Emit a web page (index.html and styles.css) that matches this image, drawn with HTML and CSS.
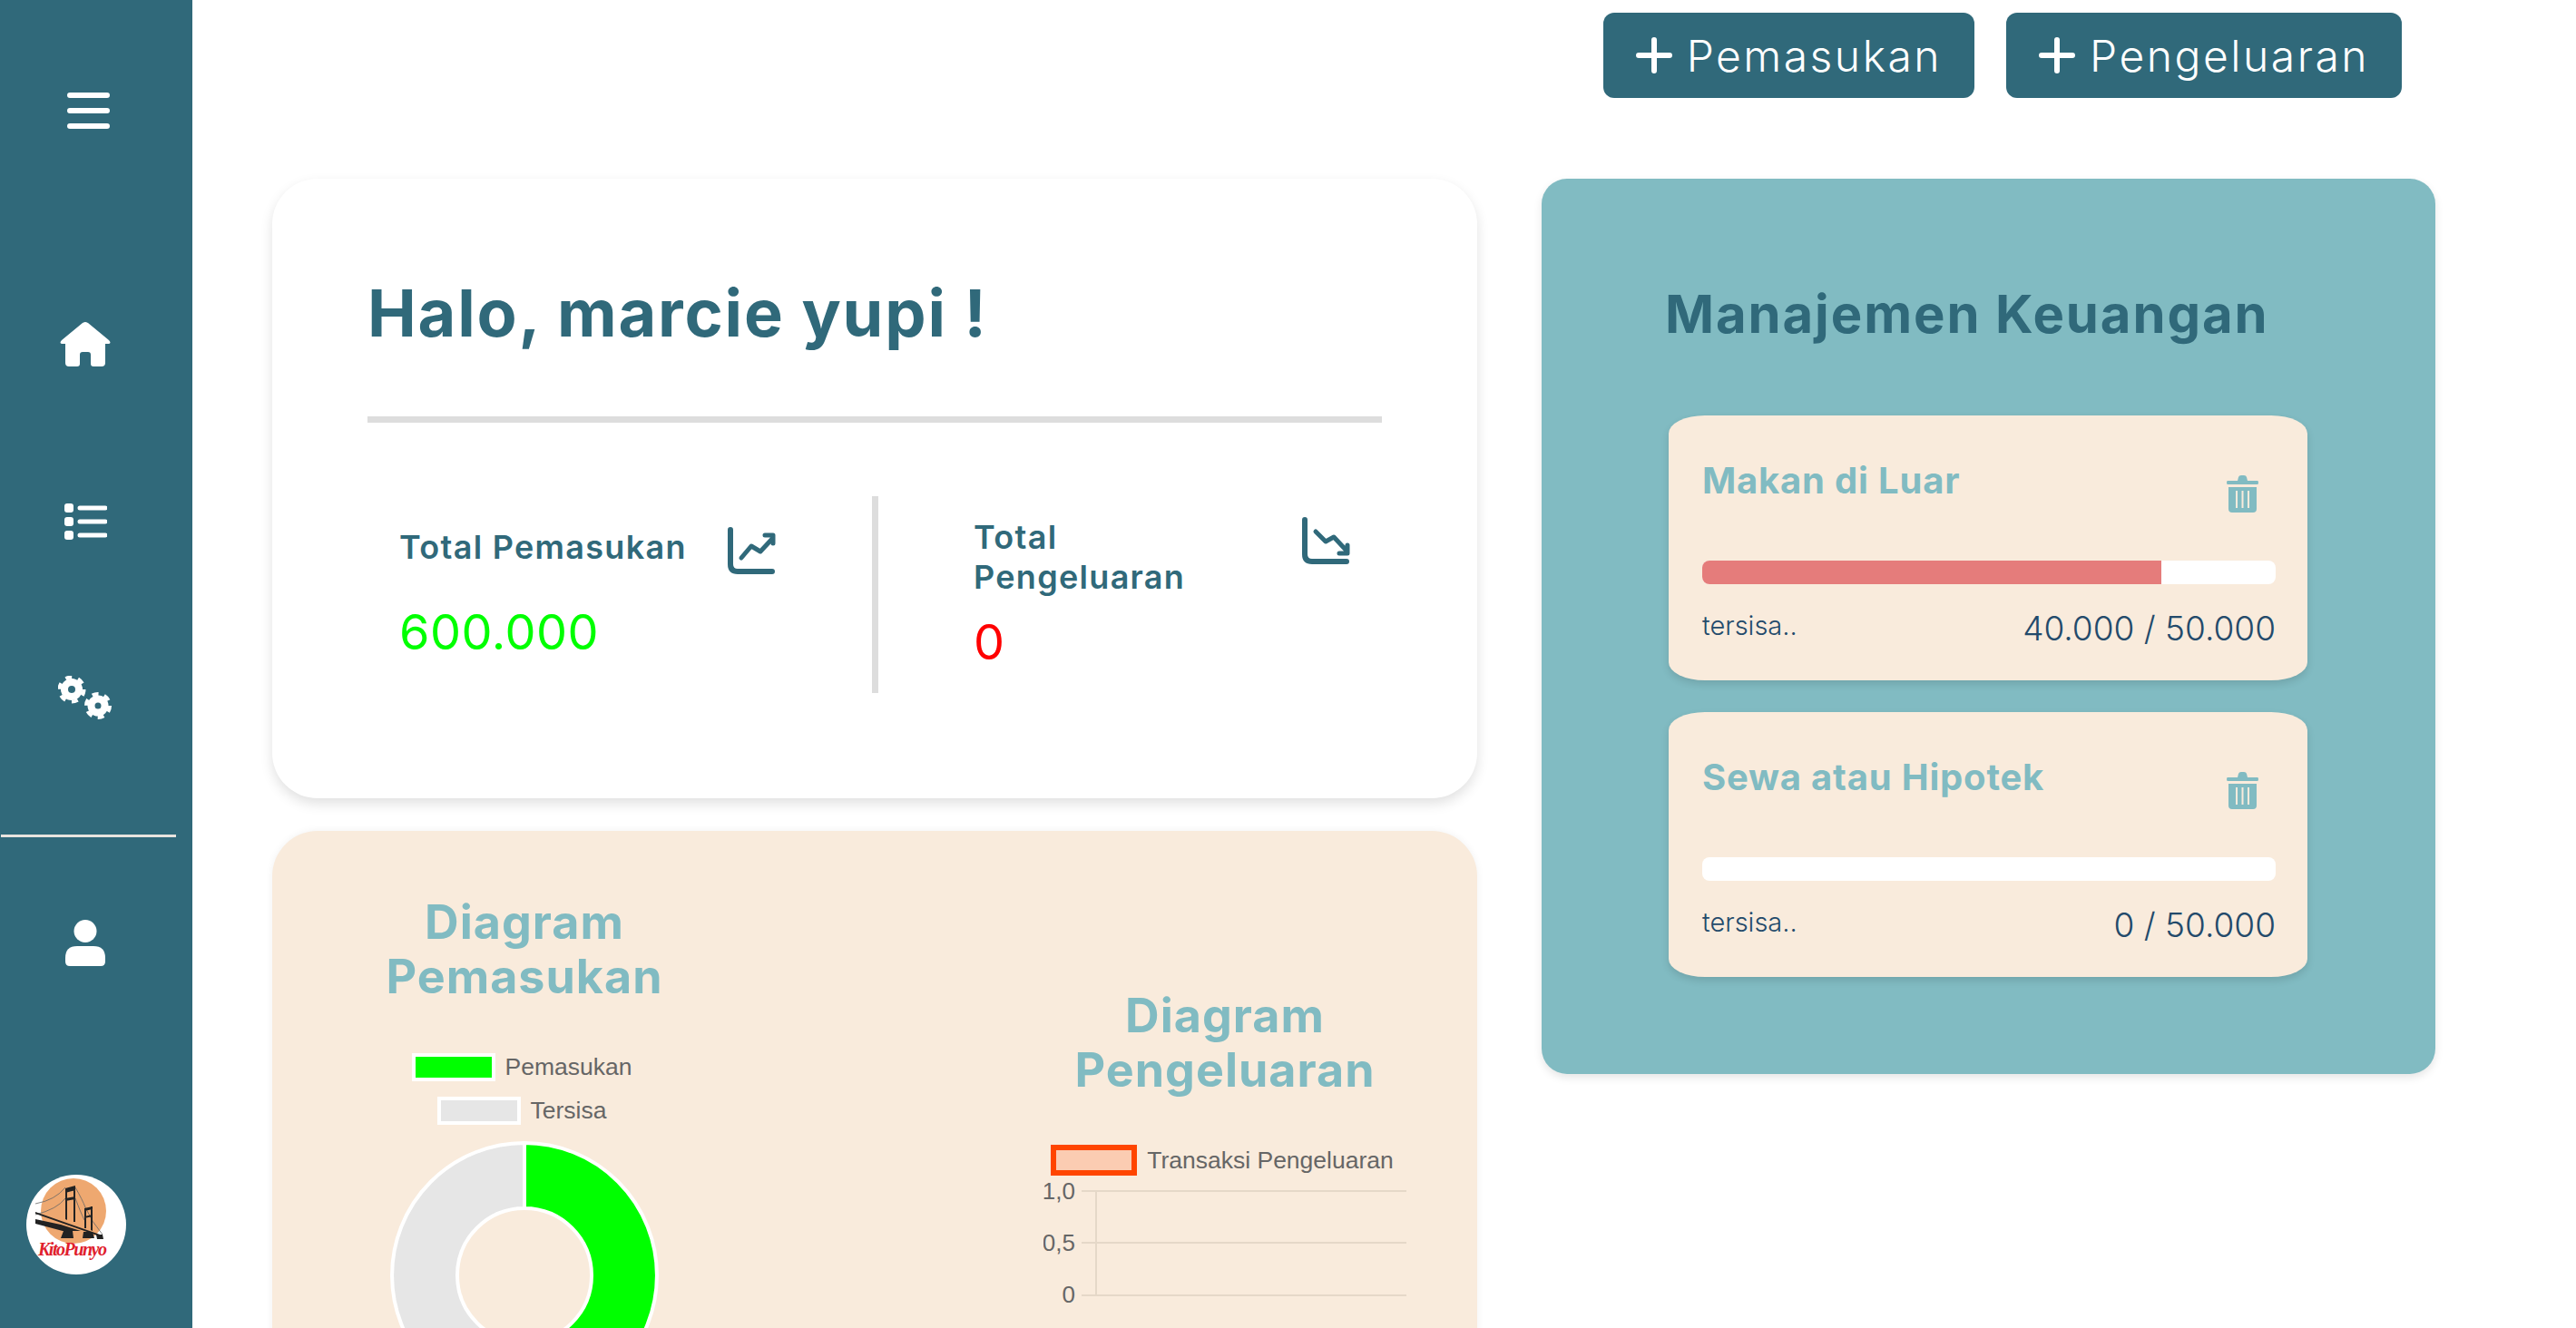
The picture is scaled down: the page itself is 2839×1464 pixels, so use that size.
FILE: index.html
```html
<!DOCTYPE html>
<html lang="id">
<head>
    <meta charset="UTF-8">
    <meta name="viewport" content="width=device-width, initial-scale=1.0">
    <title>KitoPunyo</title>
    <link rel="stylesheet" href="styles.css">
</head>
<body>
    <div class="app">
        <!-- Sidebar -->
        <nav class="sidebar">
            <svg class="nav-icon icon-menu" viewBox="0 0 47 40"><path d="M3 3H44M3 20H44M3 37H44" stroke="#fff" stroke-width="6" stroke-linecap="round"/></svg>
            <svg class="nav-icon icon-home" viewBox="0 0 56 49"><path d="M28 0Q29 0 31 1L54 20Q57 23 54 24H50V45Q50 49 46 49H37Q34 49 34 46V36Q34 33 31 33H25Q22 33 22 36V46Q22 49 19 49H10Q6 49 6 45V24H2Q-1 23 2 20L25 1Q27 0 28 0Z" fill="#fff"/></svg>
            <svg class="nav-icon icon-list" viewBox="0 0 47 40"><g fill="#fff"><rect x="0" y="0" width="10" height="10" rx="3"/><rect x="0" y="15" width="10" height="10" rx="3"/><rect x="0" y="30" width="10" height="10" rx="3"/></g><path d="M17 5H45M17 20H45M17 35H45" stroke="#fff" stroke-width="5" stroke-linecap="round"/></svg>
            <svg class="nav-icon icon-gears" viewBox="0 0 60 49">
                <g fill="none" stroke="#fff">
                    <circle cx="15" cy="15" r="8" stroke-width="8"/>
                    <circle cx="15" cy="15" r="13.5" stroke-width="4" stroke-dasharray="7 7.1"/>
                    <circle cx="44" cy="33" r="7.5" stroke-width="8"/>
                    <circle cx="44" cy="33" r="13" stroke-width="4" stroke-dasharray="7 6.6"/>
                </g>
            </svg>
            <div class="nav-divider"></div>
            <svg class="nav-icon icon-user" viewBox="0 0 44 51"><circle cx="22" cy="12.5" r="12.5" fill="#fff"/><path d="M0 46V42Q0 29 13 29H31Q44 29 44 42V46Q44 51 39 51H5Q0 51 0 46Z" fill="#fff"/></svg>
            <svg class="nav-logo" viewBox="0 0 110 110">
                <circle cx="55" cy="55" r="55" fill="#fff"/>
                <ellipse cx="52" cy="40" rx="36" ry="36" fill="#eea870"/>
                <g fill="none" stroke="#666" stroke-width="0.8">
                    <path d="M10 32Q32 28 43 14M10 44Q34 38 43 26M54 14Q62 28 65 36Q72 52 84 66M54 26Q60 42 64 50"/>
                </g>
                <g fill="#222">
                    <path d="M43 16L45 16V50L43 49ZM52 13L54 13V52L52 52ZM43 15L54 12V17L43 20ZM43 26L54 24V27L43 29ZM64 37L66 37V59L64 59ZM71 35L73 35V62L71 61ZM64 37L73 35V38L64 40ZM64 46L73 44V46L64 48Z"/>
                    <path d="M10 41L84 67V69L10 43ZM10 49L38 55L60 62H40L10 54Z"/>
                    <path d="M41 62H51L52 70H38ZM63 63H73L75 70H62ZM77 66H84L85 71H78Z"/>
                </g>
                <text x="13" y="89" class="logo-text" textLength="76">KitoPunyo</text>
            </svg>
        </nav>

        <main class="main">
            <div class="actions">
                <button class="btn">
                    <svg class="btn-plus" viewBox="0 0 40 40"><path d="M20 3V37M3 20H37" stroke="#fff" stroke-width="6" stroke-linecap="round"/></svg>
                    Pemasukan
                </button>
                <button class="btn">
                    <svg class="btn-plus" viewBox="0 0 40 40"><path d="M20 3V37M3 20H37" stroke="#fff" stroke-width="6" stroke-linecap="round"/></svg>
                    Pengeluaran
                </button>
            </div>

            <div class="content">
                <div class="left-col">
                    <!-- Greeting -->
                    <section class="card-hello">
                        <h1>Halo, marcie yupi !</h1>
                        <hr class="hello-line">
                        <div class="stats">
                            <div class="stat stat-in">
                                <div class="stat-head">
                                    <span class="stat-label">Total Pemasukan</span>
                                    <svg class="stat-icon" viewBox="1 0 53 53"><path d="M4 3V41Q4 49 12 49H50" fill="none" stroke="#30697a" stroke-width="6" stroke-linecap="round"/><path d="M16 34L27 21L37 27L50 13M42 9H51V18" fill="none" stroke="#30697a" stroke-width="5" stroke-linecap="round" stroke-linejoin="round"/></svg>
                                </div>
                                <div class="stat-value value-in">600.000</div>
                            </div>
                            <div class="stat-divider"></div>
                            <div class="stat stat-out">
                                <div class="stat-head">
                                    <span class="stat-label">Total Pengeluaran</span>
                                    <svg class="stat-icon" viewBox="1 0 53 53"><path d="M4 3V41Q4 49 12 49H50" fill="none" stroke="#30697a" stroke-width="6" stroke-linecap="round"/><path d="M16 16L27 27L36 22L50 37M42 40H51V31" fill="none" stroke="#30697a" stroke-width="5" stroke-linecap="round" stroke-linejoin="round"/></svg>
                                </div>
                                <div class="stat-value value-out">0</div>
                            </div>
                        </div>
                    </section>

                    <!-- Charts -->
                    <section class="card-charts">
                        <div class="chart-col chart-income">
                            <h2>Diagram Pemasukan</h2>
                            <div class="legend">
                                <div class="legend-row"><span class="swatch swatch-green"></span>Pemasukan</div>
                                <div class="legend-row"><span class="swatch swatch-grey"></span>Tersisa</div>
                            </div>
                            <svg class="donut" viewBox="0 0 300 300">
                                <path d="M150 4A146 146 0 0 1 150 296L150 224A74 74 0 0 0 150 76Z" fill="#00ff00" stroke="#fff" stroke-width="4"/>
                                <path d="M150 4A146 146 0 0 0 150 296L150 224A74 74 0 0 1 150 76Z" fill="#e6e6e6" stroke="#fff" stroke-width="4"/>
                            </svg>
                        </div>
                        <div class="chart-col chart-expense">
                            <h2>Diagram Pengeluaran</h2>
                            <div class="legend">
                                <div class="legend-row"><span class="swatch swatch-orange"></span>Transaksi Pengeluaran</div>
                            </div>
                            <svg class="line-chart" viewBox="0 0 400 150">
                                <path d="M42 14H400M42 71H400M42 129H400M58 14V129" stroke="#e5d8c8" stroke-width="2" fill="none"/>
                                <text x="35" y="23" class="axis-label">1,0</text>
                                <text x="35" y="80" class="axis-label">0,5</text>
                                <text x="35" y="137" class="axis-label">0</text>
                            </svg>
                        </div>
                    </section>
                </div>

                <!-- Budget panel -->
                <section class="panel">
                    <h2 class="panel-title">Manajemen Keuangan</h2>

                    <div class="budget">
                        <div class="budget-head">
                            <h3>Makan di Luar</h3>
                            <svg class="trash" viewBox="0 0 35 41"><path d="M1 6H12L13 2Q13.500 0 16 0H19Q21.500 0 22 2L23 6H34Q35 6 35 8T34 10H1Q0 10 0 8T1 6Z" fill="#81bbc2"/><path fill-rule="evenodd" d="M2 13H33V37Q33 41 29 41H6Q2 41 2 37ZM10 17V36H12V17ZM16.500 17V36H18.500V17ZM23 17V36H25V17Z" fill="#81bbc2"/></svg>
                        </div>
                        <div class="bar"><div class="bar-fill" style="width: 80%"></div></div>
                        <div class="budget-foot">
                            <span class="left-text">tersisa..</span>
                            <span class="amount">40.000 / 50.000</span>
                        </div>
                    </div>

                    <div class="budget">
                        <div class="budget-head">
                            <h3>Sewa atau Hipotek</h3>
                            <svg class="trash" viewBox="0 0 35 41"><path d="M1 6H12L13 2Q13.500 0 16 0H19Q21.500 0 22 2L23 6H34Q35 6 35 8T34 10H1Q0 10 0 8T1 6Z" fill="#81bbc2"/><path fill-rule="evenodd" d="M2 13H33V37Q33 41 29 41H6Q2 41 2 37ZM10 17V36H12V17ZM16.500 17V36H18.500V17ZM23 17V36H25V17Z" fill="#81bbc2"/></svg>
                        </div>
                        <div class="bar"></div>
                        <div class="budget-foot">
                            <span class="left-text">tersisa..</span>
                            <span class="amount">0 / 50.000</span>
                        </div>
                    </div>
                </section>
            </div>
        </main>
    </div>
</body>
</html>
```
FILE: styles.css
```css
html, body {
    margin: 0;
    height: 100%;
    overflow: hidden;
    background: #fff;
}
body {
    font-family: Inter, "Open Sans", sans-serif;
    color: #30697a;
}
.app {
    display: flex;
    height: 1464px;
}

/* Sidebar */
.sidebar {
    width: 212px;
    flex: none;
    background: #30697a;
    display: flex;
    flex-direction: column;
    align-items: flex-start;
    padding: 102px 0 59px;
    box-sizing: border-box;
}
.nav-icon {
    display: block;
}
.icon-menu {
    width: 47px;
    height: 40px;
    margin-left: 74px;
}
.icon-home {
    width: 56px;
    height: 49px;
    margin: 213px 0 0 66px;
}
.icon-list {
    width: 47px;
    height: 40px;
    margin: 151px 0 0 71px;
}
.icon-gears {
    width: 60px;
    height: 49px;
    margin: 150px 0 0 64px;
}
.nav-divider {
    width: 193px;
    height: 3px;
    margin: 126px 0 0 1px;
    background: #e8e4df;
}
.icon-user {
    width: 44px;
    height: 51px;
    margin: 91px 0 0 72px;
}
.nav-logo {
    width: 110px;
    height: 110px;
    margin: auto 0 0 29px;
}
.logo-text {
    font-family: "Liberation Serif", serif;
    font-style: italic;
    font-weight: 700;
    font-size: 20px;
    fill: #e0202c;
}

/* Top buttons */
.main {
    flex: 1;
    min-width: 0;
    padding-top: 14px;
}
.actions {
    display: flex;
    justify-content: flex-end;
    gap: 35px;
    padding-right: 192px;
}
.btn {
    display: flex;
    align-items: center;
    gap: 16px;
    height: 94px;
    padding: 0 36px;
    border: none;
    border-radius: 12px;
    background: #30697a;
    color: #fff;
    font-family: inherit;
    font-size: 48px;
    font-weight: 300;
    letter-spacing: 2.500px;
}
.btn-plus {
    width: 40px;
    height: 40px;
    flex: none;
}

.content {
    display: flex;
    align-items: flex-start;
    gap: 71px;
    margin-top: 89px;
    padding-left: 88px;
}
.left-col {
    width: 1328px;
    flex: none;
}

/* Greeting card */
.card-hello {
    height: 683px;
    box-sizing: border-box;
    padding: 106px 105px 0;
    background: #fff;
    border-radius: 50px;
    box-shadow: 0 6px 14px rgba(0, 0, 0, 0.12);
}
.card-hello h1 {
    margin: 0;
    font-size: 72px;
    line-height: 84px;
    font-weight: 700;
    letter-spacing: 1.8px;
}
.hello-line {
    height: 7px;
    margin: 72px 0 0;
    border: none;
    background: #ddd;
}
.stats {
    display: flex;
    height: 217px;
    margin-top: 81px;
}
.stat {
    flex: 1;
    min-width: 0;
}
.stat-divider {
    width: 7px;
    flex: none;
    background: #ddd;
}
.stat-in {
    padding: 34px 106px 0 35px;
}
.stat-out {
    padding: 23px 35px 0 105px;
}
.stat-head {
    display: flex;
    justify-content: space-between;
    align-items: flex-start;
}
.stat-label {
    width: 330px;
    font-size: 36px;
    line-height: 44px;
    font-weight: 600;
    letter-spacing: 1.3px;
}
.stat-icon {
    width: 53px;
    height: 53px;
    flex: none;
}
.stat-value {
    font-size: 54px;
    line-height: 60px;
    font-weight: 400;
    letter-spacing: 0.5px;
}
.stat-in .stat-value {
    margin-top: 33px;
}
.stat-out .stat-value {
    margin-top: 20px;
}
.value-in {
    color: #00ff00;
}
.value-out {
    color: #ff0000;
}

/* Chart card */
.card-charts {
    display: flex;
    align-items: flex-start;
    height: 700px;
    margin-top: 36px;
    background: #f9ebdc;
    border-radius: 50px;
    box-shadow: 0 0 8px rgba(0, 0, 0, 0.06);
}
.chart-col h2 {
    margin: 0;
    font-size: 52px;
    line-height: 60px;
    font-weight: 700;
    letter-spacing: 1px;
    text-align: center;
    color: #81bbc2;
}
.chart-income {
    width: 356px;
    margin: 71px 0 0 100px;
}
.chart-expense {
    width: 400px;
    margin: 174px 0 0 394px;
}
.legend {
    display: flex;
    flex-direction: column;
    align-items: center;
    gap: 17px;
    margin-top: 54px;
    padding-right: 6px;
    font-family: "Liberation Sans", Arial, sans-serif;
    font-size: 26.500px;
    color: #666;
}
.chart-expense .legend {
    margin-top: 52px;
}
.legend-row {
    display: flex;
    align-items: center;
    gap: 11px;
}
.swatch {
    display: block;
    box-sizing: border-box;
    width: 92px;
    height: 31px;
    border: 4px solid #fff;
}
.swatch-green {
    background: #00ff00;
}
.swatch-grey {
    background: #e6e6e6;
}
.swatch-orange {
    width: 95px;
    height: 34px;
    border: 6px solid #ff4500;
    background: #fbccb2;
}
.donut {
    display: block;
    width: 300px;
    height: 300px;
    margin: 16px auto 0;
}
.line-chart {
    display: block;
    width: 400px;
    height: 150px;
    margin-top: 3px;
}
.axis-label {
    font-family: "Liberation Sans", Arial, sans-serif;
    font-size: 26px;
    fill: #666;
    text-anchor: end;
}

/* Budget panel */
.panel {
    width: 985px;
    height: 987px;
    flex: none;
    box-sizing: border-box;
    padding: 113px 141px 0 140px;
    background: #81bbc2;
    border-radius: 28px;
    box-shadow: 0 4px 10px rgba(0, 0, 0, 0.1);
}
.panel-title {
    margin: 0 0 76px -4px;
    font-size: 58px;
    line-height: 72px;
    font-weight: 700;
    letter-spacing: 1.9px;
    white-space: nowrap;
    color: #30697a;
}
.budget {
    box-sizing: border-box;
    height: 292px;
    margin-bottom: 35px;
    padding: 47px 35px 0 37px;
    background: #f9ebdc;
    border-radius: 40px / 20px;
    box-shadow: 0 4px 8px rgba(0, 0, 0, 0.12);
}
.budget-head {
    display: flex;
    justify-content: space-between;
    align-items: flex-start;
    height: 60px;
}
.budget-head h3 {
    margin: 0;
    font-size: 40px;
    line-height: 50px;
    font-weight: 700;
    letter-spacing: 0.8px;
    color: #81bbc2;
}
.trash {
    width: 35px;
    height: 41px;
    flex: none;
    margin: 19px 19px 0 0;
}
.bar {
    height: 26px;
    margin-top: 53px;
    background: #fff;
    border-radius: 8px;
    overflow: hidden;
}
.bar-fill {
    height: 100%;
    background: #e57c7b;
}
.budget-foot {
    display: flex;
    justify-content: space-between;
    align-items: flex-start;
    margin-top: 26px;
    color: #234a6b;
    font-weight: 300;
}
.left-text {
    font-size: 29px;
    line-height: 40px;
}
.amount {
    font-size: 37px;
    line-height: 46px;
}
```
